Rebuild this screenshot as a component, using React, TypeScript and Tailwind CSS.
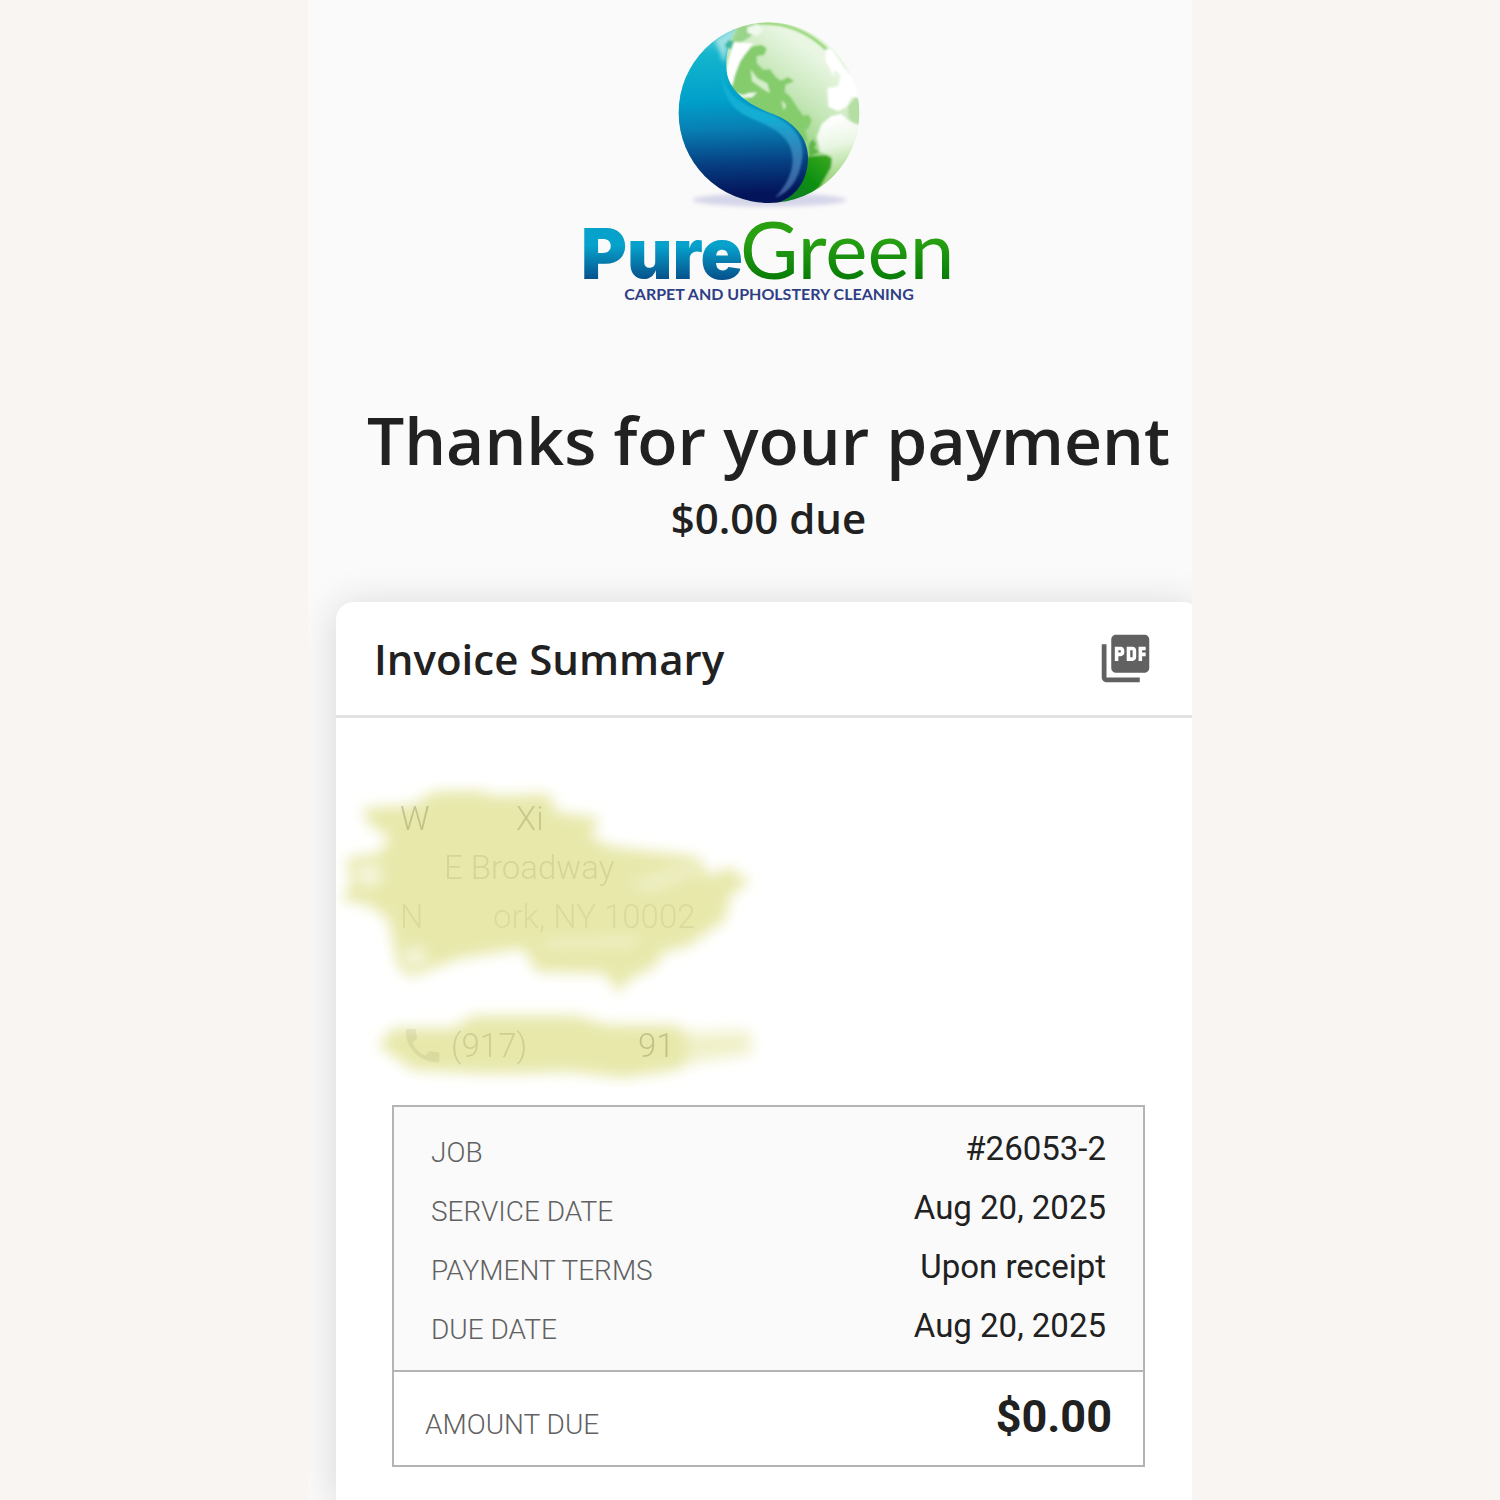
import React, { ReactNode } from 'react';
import clsx from 'clsx';
import { MdPhone, MdPictureAsPdf } from 'react-icons/md';

type DetailRowProps = {
  label: string;
  value: string;
};

type FadedProps = {
  className?: string;
  children: ReactNode;
};

const details: DetailRowProps[] = [
  { label: 'JOB', value: '#26053-2' },
  { label: 'SERVICE DATE', value: 'Aug 20, 2025' },
  { label: 'PAYMENT TERMS', value: 'Upon receipt' },
  { label: 'DUE DATE', value: 'Aug 20, 2025' }
];

const Logo = (): JSX.Element => (
  <svg viewBox="0 0 382 290" className="w-[382px] h-[290px]" role="img" aria-label="PureGreen">
    <defs>
      <linearGradient id="water" gradientUnits="userSpaceOnUse" x1="250" y1="40" x2="270" y2="578">
        <stop offset="0" stopColor="#7fd8dc" />
        <stop offset="0.16" stopColor="#14b5cd" />
        <stop offset="0.42" stopColor="#00a0cb" />
        <stop offset="0.58" stopColor="#0880b4" />
        <stop offset="0.78" stopColor="#063f82" />
        <stop offset="0.95" stopColor="#04145a" />
      </linearGradient>
      <linearGradient id="pale" gradientUnits="userSpaceOnUse" x1="270" y1="330" x2="430" y2="110">
        <stop offset="0" stopColor="#8fd078" />
        <stop offset="0.5" stopColor="#c4e6b6" />
        <stop offset="1" stopColor="#e8f6e2" />
      </linearGradient>
      <linearGradient id="south" gradientUnits="userSpaceOnUse" x1="500" y1="330" x2="540" y2="520">
        <stop offset="0" stopColor="#ffffff" />
        <stop offset="0.4" stopColor="#eaf6e4" />
        <stop offset="1" stopColor="#8fd06c" />
      </linearGradient>
      <linearGradient id="leaf" gradientUnits="userSpaceOnUse" x1="510" y1="430" x2="380" y2="580">
        <stop offset="0" stopColor="#3faa20" />
        <stop offset="0.5" stopColor="#0d9010" />
        <stop offset="1" stopColor="#0a7a2c" />
      </linearGradient>
      <linearGradient id="rim" x1="0" y1="0" x2="0" y2="1">
        <stop offset="0" stopColor="#2cc4dc" stopOpacity="0.1" />
        <stop offset="0.4" stopColor="#14b4d8" />
        <stop offset="0.65" stopColor="#3a8cc0" />
        <stop offset="1" stopColor="#4a64a4" />
      </linearGradient>
      <linearGradient id="pure" gradientUnits="userSpaceOnUse" x1="0" y1="207" x2="0" y2="264">
        <stop offset="0.4" stopColor="#06a2cc" />
        <stop offset="1" stopColor="#064f8a" />
      </linearGradient>
      <linearGradient id="green" gradientUnits="userSpaceOnUse" x1="0" y1="207" x2="0" y2="264">
        <stop offset="0.3" stopColor="#28a012" />
        <stop offset="1" stopColor="#067c08" />
      </linearGradient>
      <clipPath id="globe">
        <circle cx="327" cy="308" r="271" />
      </clipPath>
      <filter id="soft" x="-20%" y="-20%" width="140%" height="140%">
        <feGaussianBlur stdDeviation="3" />
      </filter>
      <filter id="haze" x="-20%" y="-100%" width="140%" height="300%">
        <feGaussianBlur stdDeviation="7" />
      </filter>
    </defs>

    <g transform="translate(82 -6) scale(0.3333)">
      <ellipse cx="328" cy="570" rx="230" ry="20" fill="#d6d6ea" filter="url(#haze)" />
      <g clipPath="url(#globe)">
        <circle cx="327" cy="308" r="271" fill="url(#pale)" />
        <g filter="url(#soft)">
          <path
            d="M205 230 L222 188 L240 145 L260 128 L275 110 L305 105 L320 116 L312 135 L290 138 L290 160 L310 180 L330 178 L346 200 L362 212 L385 202 L402 214 L376 224 L374 246 L392 262 L410 290 L430 318 L445 314 L455 330 L446 352 L436 362 L445 400 L400 380 L300 300 Z"
            fill="#84cc6c"
          />
          <path
            d="M272 178 L292 205 L322 220 L330 250 L308 236 L276 214 Z M364 270 L378 285 L372 302 Z"
            fill="#d5efca"
          />
          <path
            d="M226 250 L250 255 L264 250 L292 247 L276 262 L240 264 Z"
            fill="#f2faee"
          />
          <path
            d="M497 120 L515 118 L548 168 L590 215 L606 262 L575 262 L560 290 L535 304 L505 290 L502 235 L535 228 L542 195 L524 178 L520 200 L508 170 L497 155 Z"
            fill="#ffffff"
          />
          <path
            d="M470 380 L485 342 L515 318 L545 312 L570 335 L620 340 L620 600 L440 600 L515 470 L515 438 L480 426 Z"
            fill="url(#south)"
          />
          <path d="M564 290 L585 262 L610 270 L606 345 L580 340 L566 322 Z" fill="#b4dea2" />
          <path d="M443 440 L500 436 L516 446 L512 475 L480 530 L430 575 L340 595 L400 540 Z" fill="url(#leaf)" />
          <path d="M446 404 L458 388 L468 402 L462 414 L478 426 L448 440 Z" fill="#5fb548" />
          <path d="M290 40 Q410 32 500 118" fill="none" stroke="#8fd36c" strokeWidth="8" />
          <path d="M205 100 L225 50 L285 38 L300 55 L270 80 L240 100 Z" fill="#9ad48a" />
          <path d="M262 52 L292 42 L312 58 L290 78 L262 68 Z" fill="#f0f9ec" />
          <path d="M205 150 L222 96 L280 100 L258 128 L240 155 L225 195 L216 230 L195 200 Z" fill="#ffffff" />
        </g>
        <path
          d="M235 40 C205 90 192 150 202 195 C215 250 270 285 340 313 C400 335 448 385 444 450 C440 520 405 560 350 580 L250 620 L20 560 L20 40 Z"
          fill="url(#water)"
        />
        <path
          d="M185 160 C184 250 235 280 320 308 C395 335 440 385 425 455 C415 510 390 545 345 563 C395 510 412 450 385 400 C350 340 265 335 220 290 C190 255 180 210 185 160 Z"
          fill="url(#rim)"
          fillOpacity="0.85"
          filter="url(#soft)"
        />
        <path d="M165 90 L235 50 L205 110 L192 160 Z" fill="#c5edea" fillOpacity="0.7" filter="url(#haze)" />
        <path d="M194 108 L205 92 L220 94 L212 118 Z" fill="#3cb59c" filter="url(#soft)" />
      </g>
    </g>

    <text x="3" y="263" fontSize="70" className="font-['Inter',sans-serif] font-black" fill="url(#pure)">
      Pure
    </text>
    <text x="162" y="263" fontSize="80" className="font-['Lato',sans-serif]" fill="url(#green)">
      Green
    </text>
    <text
      x="191"
      y="284"
      fontSize="16"
      textAnchor="middle"
      className="font-['Lato',sans-serif] font-bold"
      fill="#2f3f85"
    >
      CARPET AND UPHOLSTERY CLEANING
    </text>
  </svg>
);

// marker strokes that cover the customer's contact details
const Marker = (): JSX.Element => (
  <svg
    viewBox="0 0 1320 930"
    className="absolute -left-1.5 top-[62px] w-[440px] h-[310px]"
    aria-hidden="true"
  >
    <defs>
      <filter id="marker" x="-10%" y="-10%" width="120%" height="120%">
        <feGaussianBlur stdDeviation="20" />
      </filter>
    </defs>
    <g filter="url(#marker)" fill="#e7e8aa">
      <path d="M95 85 L250 75 L310 35 L440 32 L500 48 L660 42 L675 95 L810 115 L780 170 L845 200 L1100 230 L1140 290 L1195 262 L1260 305 L1200 345 L1185 420 L1070 500 L1000 515 L975 560 L900 595 L865 640 L825 580 L620 575 L580 505 L390 535 L240 590 L205 560 L175 420 L120 375 L35 360 L65 310 L50 235 L150 220 L180 170 L120 135 Z" />
      <path d="M145 795 L190 745 L370 745 L430 707 L740 707 L830 735 L1030 735 L1080 760 L1260 755 L1265 820 L1080 845 L1040 870 L880 893 L720 875 L570 880 L440 880 L250 870 Z" />
    </g>
    <g filter="url(#marker)" fill="#ffffff">
      <ellipse cx="118" cy="285" rx="42" ry="36" fillOpacity="0.6" />
      <ellipse cx="255" cy="530" rx="36" ry="30" fillOpacity="0.6" />
      <path d="M890 310 L1080 250 L1120 275 L960 335 Z" fillOpacity="0.35" />
      <path d="M1070 735 L1290 735 L1290 850 L1070 860 Z" fillOpacity="0.35" />
      <path d="M640 482 L920 472 L920 498 L640 504 Z" fillOpacity="0.4" />
    </g>
  </svg>
);

const Faded = ({ className, children }: FadedProps): JSX.Element => (
  <span className={clsx('text-[#6b6c3c]', className)}>{children}</span>
);

const CustomerContact = (): JSX.Element => (
  <section className="relative h-[387px] pl-16 pt-[76px]">
    <Marker />
    <address className="relative not-italic text-[33px] leading-[49px] font-light whitespace-nowrap">
      <div className="flex">
        <Faded className="w-[116px] opacity-30">W</Faded>
        <Faded className="opacity-25">Xi</Faded>
      </div>
      <div className="pl-11">
        <Faded className="opacity-15">E Broadway</Faded>
      </div>
      <div className="flex">
        <Faded className="w-[93px] opacity-10">N</Faded>
        <Faded className="opacity-10">ork, NY 10002</Faded>
      </div>
    </address>
    <div className="relative flex items-center mt-20 text-[33px] leading-[49px] font-light">
      <MdPhone className="mr-1.5 text-[45px] text-[#6b6c3c] opacity-10" />
      <Faded className="w-[187px] opacity-20">(917)</Faded>
      <Faded className="opacity-30">91</Faded>
    </div>
  </section>
);

const DetailRow = ({ label, value }: DetailRowProps): JSX.Element => (
  <tr className="h-[59px]">
    <th scope="row" className="pt-1 text-left text-[28px] leading-10 font-light text-[#616161]">
      {label}
    </th>
    <td className="pb-1 text-right text-[33px] leading-10">{value}</td>
  </tr>
);

const InvoiceSummary = (): JSX.Element => (
  <main className="flex-1 rounded-t-[18px] bg-white pb-8 shadow-[0_4px_40px_rgba(0,0,0,0.15)]">
    <header className="flex items-center justify-between h-[116px] border-b-3 border-[#e2e2e2] pl-[38px] pr-[47px]">
      <h2 className="font-['Open_Sans',sans-serif] text-[42px] leading-[60px] font-semibold">
        Invoice Summary
      </h2>
      <button type="button" aria-label="Download PDF">
        <MdPictureAsPdf className="text-[57px] text-[#616161]" />
      </button>
    </header>
    <CustomerContact />
    <section className="mx-14 border-2 border-[#b4b4b4]">
      <div className="bg-[#fafafa] px-[37px] pt-3.5 pb-[13px]">
        <table className="w-full">
          <tbody>
            {details.map(({ label, value }) => (
              <DetailRow key={label} label={label} value={value} />
            ))}
          </tbody>
        </table>
      </div>
      <div className="flex items-center justify-between h-[95px] border-t-2 border-[#b4b4b4] px-[31px]">
        <span className="pt-3 text-[28px] leading-10 font-light text-[#616161]">AMOUNT DUE</span>
        <strong className="pb-1 text-[45px] leading-[52px] font-bold">$0.00</strong>
      </div>
    </section>
  </main>
);

const App = (): JSX.Element => (
  <div className="min-h-screen bg-[#f9f5f2] font-['Roboto',sans-serif] text-[#212121]">
    <div className="flex flex-col max-w-[884px] min-h-screen mx-auto overflow-hidden bg-[#fafafa] pl-7">
      <div className="flex flex-col flex-1 -mr-[9px]">
        <div className="flex flex-col items-center pt-4 pb-[54px]">
          <Logo />
          <h1 className="mt-[84px] font-['Open_Sans',sans-serif] text-[66px] leading-[98px] font-semibold whitespace-nowrap">
            Thanks for your payment
          </h1>
          <p className="font-['Open_Sans',sans-serif] text-[42px] leading-[60px] font-semibold">
            $0.00 due
          </p>
        </div>
        <InvoiceSummary />
      </div>
    </div>
  </div>
);

export default App;
